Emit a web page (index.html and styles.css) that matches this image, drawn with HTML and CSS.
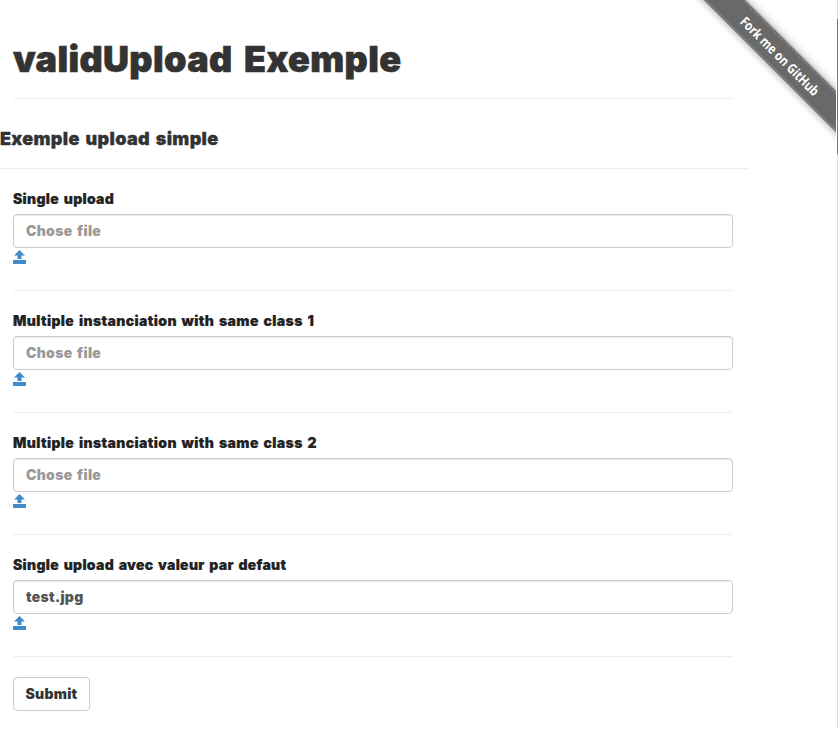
FILE: index.html
```html
<!DOCTYPE html>
<html lang="fr">
<head>
<meta charset="utf-8">
<title>validUpload Exemple</title>
<link rel="stylesheet" href="styles.css">
</head>
<body>
<svg width="0" height="0" class="defs"><symbol id="up" viewBox="0 0 13 14"><path d="M6.5 0 12 5.5H8.5V9h-4V5.5H1zM0 10h13v3.2a.8.8 0 0 1-.8.8H.8a.8.8 0 0 1-.8-.8z"/></symbol></svg>
<a class="ribbon" href="#"><span class="band"><span class="ribbon-text">Fork me on GitHub</span></span></a>
<div class="scrollbar"><div class="thumb"></div></div>
<main class="container">
  <h1>validUpload Exemple</h1>
  <hr>
  <div class="row"><h3>Exemple upload simple</h3><hr></div>
  <form>
    <div class="group"><label>Single upload</label><input type="text" placeholder="Chose file"><a class="upload" href="#"><svg><use href="#up"/></svg></a></div>
    <hr>
    <div class="group"><label class="wide">Multiple instanciation with same class 1</label><input type="text" placeholder="Chose file"><a class="upload" href="#"><svg><use href="#up"/></svg></a></div>
    <hr>
    <div class="group"><label class="wide">Multiple instanciation with same class 2</label><input type="text" placeholder="Chose file"><a class="upload" href="#"><svg><use href="#up"/></svg></a></div>
    <hr>
    <div class="group"><label class="narrow">Single upload avec valeur par defaut</label><input type="text" value="test.jpg"><a class="upload" href="#"><svg><use href="#up"/></svg></a></div>
    <hr>
    <button type="button">Submit</button>
  </form>
</main>
</body>
</html>
```
FILE: styles.css
```css
* { box-sizing: border-box; }
html { overflow: hidden; }
body { margin: 0; background: #fff; color: #333; font: 900 14px/20px Inter, "Liberation Sans", sans-serif; height: 729px; overflow: hidden; }
.defs { position: absolute; }
.container { width: 720px; margin-left: 13px; padding-top: 39px; }
h1 { margin: 0 0 19px; font-size: 36px; line-height: 40px; font-weight: 900; white-space: nowrap; letter-spacing: .35px; word-spacing: 4px; -webkit-text-stroke: .6px #333; }
hr { margin: 0; border: 0; border-top: 1px solid #eee; height: 1px; }
.row { margin: 30px -15px 0 -13px; }
h3 { margin: 0 0 19px; font-size: 18px; line-height: 20px; font-weight: 900; white-space: nowrap; letter-spacing: .32px; word-spacing: 2px; -webkit-text-stroke: .3px #333; }
.group { height: 121px; padding-top: 20px; display: flex; flex-direction: column; align-items: flex-start; }
label { height: 25px; color: #222; white-space: nowrap; letter-spacing: .3px; word-spacing: 1.6px; -webkit-text-stroke: .2px #222; }
.wide { letter-spacing: .37px; }
.narrow { letter-spacing: .29px; }
input { width: 720px; height: 34px; padding: 5px 12px 7px; border: 1px solid #ccc; border-radius: 4px; font: inherit; letter-spacing: .28px; word-spacing: 1.6px; color: #555; box-shadow: inset 0 1px 1px rgba(0,0,0,.075); }
input::placeholder { color: #999; opacity: 1; }
.upload { height: 14px; margin-top: 2px; }
.upload svg { display: block; width: 13px; height: 14px; fill: #428bca; }
button { display: block; width: 77px; height: 34px; margin-top: 20px; padding: 0; background: #fff; border: 1px solid #ccc; border-radius: 4px; color: #333; font: inherit; letter-spacing: .25px; }
.ribbon { position: absolute; top: 0; right: 2px; width: 149px; height: 149px; overflow: hidden; }
.band { position: absolute; left: -27px; top: 41px; width: 240px; height: 29px; background: #696969; transform: rotate(45deg); box-shadow: 0 0 8px rgba(0,0,0,.42); display: flex; align-items: center; justify-content: center; border: 1px solid #777; }
.band::after { content: ""; position: absolute; inset: 0; border: 1px dotted #999; }
.ribbon-text { color: #fff; font: 700 13.5px/20px "Open Sans", sans-serif; white-space: nowrap; transform: scaleX(.83); }
.scrollbar { position: absolute; right: 0; top: 0; width: 1px; height: 729px; background: #ddd; }
.thumb { margin-top: 19px; height: 135px; background: #777; }
```
